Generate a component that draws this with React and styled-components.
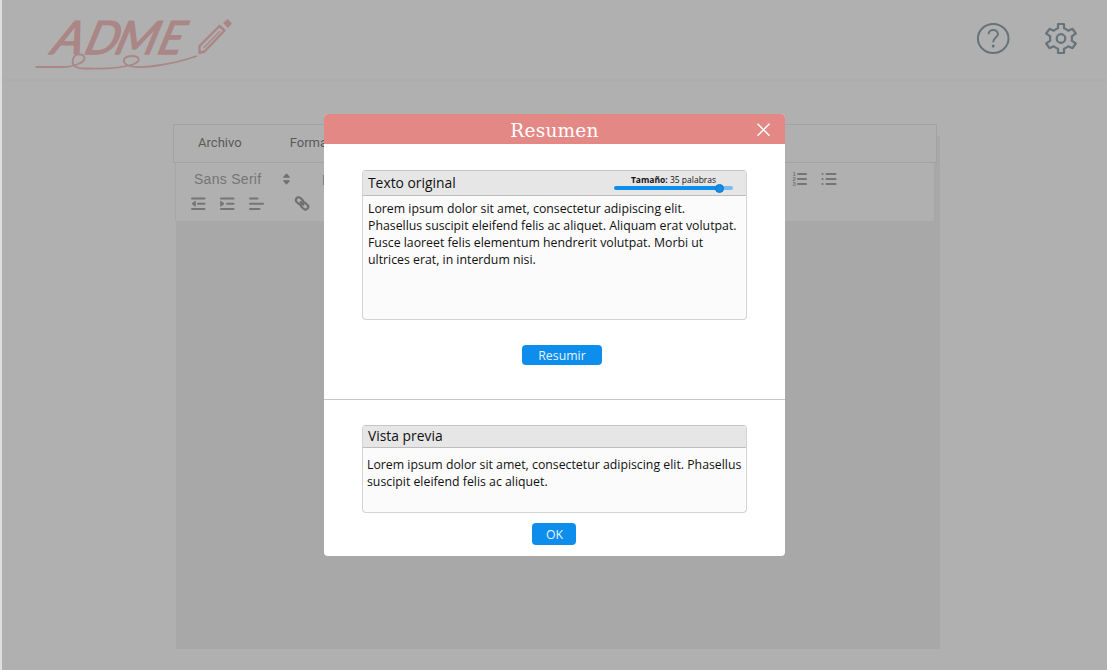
import React from "react";
import styled, { createGlobalStyle } from "styled-components";

const GlobalStyle = createGlobalStyle`
  *, *::before, *::after { box-sizing: border-box; }
  html, body { margin: 0; padding: 0; }
  body { background: #b0b0b0; font-family: "Open Sans", "Noto Sans", sans-serif; overflow: hidden; }
  p, h1, h2 { margin: 0; font-weight: 400; }
  button { font-family: inherit; border: 0; padding: 0; cursor: pointer; }
  svg { display: block; overflow: visible; }
`;

const Page = styled.div`
  height: 670px;
  border-left: 2px solid #dedede;
  background: #b0b0b0;
  overflow: hidden;
`;

const TopBar = styled.header`
  display: flex;
  align-items: flex-start;
  justify-content: space-between;
  height: 79px;
  padding: 16px 29px 0 32px;
  box-shadow: 0 2px 3px rgba(0, 0, 0, 0.02);
`;

const TopActions = styled.nav`
  display: flex;
  gap: 34px;
  padding-top: 6px;
`;

const Wordmark = styled.text`
  font-family: "Lato", "Open Sans", sans-serif;
  font-style: italic;
  font-weight: 400;
  font-size: 46px;
  fill: #aa8686;
  stroke: #aa8686;
  stroke-width: 1.3px;
  stroke-linejoin: round;
`;

const Editor = styled.main`
  width: 767px;
  height: 525px;
  margin: 45px 0 0 171px;
  background: linear-gradient(#a8a8a8, #a8a8a8) 3px 12px / 764px 513px no-repeat;
`;

const MenuBar = styled.div`
  display: flex;
  align-items: center;
  gap: 48px;
  width: 764px;
  height: 39px;
  padding: 0 24px 2px;
  border: 1px solid #a3a3a3;
  background: #b0b0b0;
  font-family: Roboto, sans-serif;
  font-size: 13px;
  letter-spacing: 0.02px;
  color: #5a5a5a;
`;

const Toolbar = styled.div`
  display: flex;
  flex-direction: column;
  width: 760px;
  height: 58px;
  margin-left: 2px;
  padding: 7px 18px 0 14px;
  border: solid #a6a6a6;
  border-width: 0 1px;
  background: #b0b0b0;
`;

const ToolRow = styled.div`
  display: flex;
  align-items: center;
  height: ${(p) => p.$height}px;
`;

const FontName = styled.span`
  display: inline-block;
  width: 93px;
  padding-left: 4px;
  font-family: "Liberation Sans", Arial, sans-serif;
  font-size: 14px;
  line-height: 16px;
  letter-spacing: 0.28px;
  color: #757575;
`;

const Tool = styled.span`
  margin-left: ${(p) => p.$gap || 0}px;
`;

const Overlay = styled.div`
  position: fixed;
  inset: 0;
  display: flex;
  align-items: flex-start;
  padding: 114.4px 0 0 324px;
`;

const Dialog = styled.section`
  width: 461px;
  height: 442px;
  border-radius: 4px;
  background: #fff;
  overflow: hidden;
`;

const DialogHeader = styled.header`
  display: grid;
  grid-template-columns: 1fr auto 1fr;
  align-items: center;
  height: 30px;
  padding: 1px 14px 0 14px;
  background: #e48886;
`;

const DialogTitle = styled.h1`
  grid-column: 2;
  font-family: "Roboto Slab", "DejaVu Serif", serif;
  font-size: 18.5px;
  line-height: 28px;
  letter-spacing: 0.25px;
  padding-top: 2px;
  color: #fff;
`;

const CloseButton = styled.button`
  justify-self: end;
  background: transparent;
`;

const Section = styled.div`
  display: flex;
  flex-direction: column;
  align-items: center;
  height: ${(p) => p.$height}px;
  padding: ${(p) => (p.$divided ? 25 : 26)}px 38px 0;
  border-top: ${(p) => (p.$divided ? "1px solid #c6c6c6" : "0")};
`;

const Panel = styled.div`
  width: 385px;
  height: ${(p) => p.$height}px;
  border: 1px solid #d3d3d3;
  border-top-color: #c4c4c4;
  border-radius: 4px;
  background: #fbfbfb;
  overflow: hidden;
`;

const PanelHeader = styled.div`
  display: flex;
  justify-content: space-between;
  height: ${(p) => p.$height}px;
  padding: 0 13px 0 5px;
  border-bottom: 1px solid #bdbdbd;
  background: #e6e6e6;
`;

const PanelTitle = styled.h2`
  font-size: 13.85px;
  line-height: ${(p) => p.$line}px;
  color: #111;
`;

const PanelText = styled.p`
  padding: ${(p) => p.$top}px 0 0 ${(p) => p.$left}px;
  font-size: 12.31px;
  line-height: 17px;
  color: #111;
  white-space: pre-line;
`;

const SizeControl = styled.div`
  display: flex;
  flex-direction: column;
  align-items: center;
  width: 119px;
  padding-top: 3px;
  font-size: 8.5px;
  line-height: 11px;
  color: #111;
`;

const Track = styled.div`
  display: flex;
  align-items: center;
  width: 100%;
  height: 4px;
  margin-top: 1px;
  border-radius: 2px;
  background: linear-gradient(90deg, #0d8dec 89%, #7bbcf0 89%);
`;

const Thumb = styled.span`
  width: 9px;
  height: 9px;
  margin-left: 101px;
  border-radius: 50%;
  border: 1px solid #1c76bb;
  background: #0d8dec;
`;

const ActionButton = styled.button`
  width: ${(p) => p.$width}px;
  height: ${(p) => p.$height}px;
  margin: ${(p) => p.$margin};
  padding: 1px 0 0 1px;
  border-radius: 4px;
  background: #0d8dec;
  color: #e8f5ff;
  font-size: 12.3px;
  line-height: ${(p) => p.$height - 1}px;
`;

function Logo() {
  return (
    <svg width="200" height="56" viewBox="34 16 200 56" fill="none" stroke="#aa8686">
      <g transform="translate(0 54) skewX(-16)">
        <Wordmark x="50" textLength="31" lengthAdjust="spacingAndGlyphs">A</Wordmark>
        <Wordmark x="83" textLength="33" lengthAdjust="spacingAndGlyphs">D</Wordmark>
        <Wordmark x="113" textLength="42" lengthAdjust="spacingAndGlyphs">M</Wordmark>
        <Wordmark x="156" textLength="24" lengthAdjust="spacingAndGlyphs">E</Wordmark>
      </g>
      <path
        d="M35.500 67H62C75 67 85 62 84.500 58C83.500 53 75 53 73 59C71 66 76 68.500 85 68.500C104 69 123 68 134 64C141 61 140 56 132 56C124 56 121 61 127 65C137 70 171 65 197 56"
        strokeWidth="1.8"
      />
      <path d="M199.500 46L219.500 26L224.500 30.500L204.500 51.500L199.500 53Z" strokeWidth="2.4" strokeLinejoin="round" />
      <path d="M203.500 48L220 31" strokeWidth="1.300" />
      <path d="M224 23L227.500 20L231 23.500L228 27Z" fill="#aa8686" strokeWidth="1.500" strokeLinejoin="round" />
    </svg>
  );
}

function HelpIcon() {
  return (
    <svg width="34" height="33" viewBox="0 0 34 33" fill="none" stroke="#66737a" strokeWidth="2">
      <ellipse cx="17.200" cy="16.500" rx="15.300" ry="14.500" />
      <path d="M12.600 12.200C12.600 6.700 21.900 6.700 21.900 12.200C21.900 15.800 17.200 15.500 17.200 20.200" />
      <circle cx="17.200" cy="24" r="1.500" fill="#66737a" stroke="none" />
    </svg>
  );
}

function GearIcon() {
  return (
    <svg width="34" height="33" viewBox="0 0 34 33" fill="none" stroke="#66737a" strokeWidth="2.200" strokeLinejoin="round">
      <path d="M14 2H20V6.200C21.700 6.800 23 7.500 24.300 8.700L28.500 6.800L31.800 11.500L27.700 14.300C28.100 15.800 28.100 17.200 27.700 18.700L31.800 21.500L28.500 26.200L24.300 24.300C23 25.500 21.700 26.200 20 26.800V31H14V26.800C12.300 26.200 11 25.500 9.700 24.300L5.500 26.200L2.200 21.500L6.300 18.700C5.900 17.200 5.900 15.800 6.300 14.300L2.200 11.500L5.500 6.800L9.700 8.700C11 7.500 12.300 6.800 14 6.200Z" />
      <circle cx="17" cy="16.500" r="4.300" />
    </svg>
  );
}

function ToolIcon({ d, children, width = 16 }) {
  return (
    <svg width={width} height="14" viewBox={`0 0 ${width} 14`} fill="none" stroke="#757575" strokeWidth="2" strokeLinecap="round">
      <path d={d} />
      {children}
    </svg>
  );
}

const ListNumber = styled.text`
  font-family: "Liberation Sans", sans-serif;
  font-weight: 700;
  font-size: 6px;
  fill: #757575;
  stroke: none;
`;

export default function App() {
  return (
    <>
      <GlobalStyle />
      <Page>
        <TopBar>
          <Logo />
          <TopActions>
            <HelpIcon />
            <GearIcon />
          </TopActions>
        </TopBar>
        <Editor>
          <MenuBar>
            <span>Archivo</span>
            <span>Formato</span>
          </MenuBar>
          <Toolbar>
            <ToolRow $height={18}>
              <FontName>Sans Serif</FontName>
              <svg width="7" height="12" viewBox="0 0 7 12" fill="#707070">
                <path d="M3.500 1.200L6.200 4.200H0.800ZM3.500 10.800L0.800 7.800H6.200Z" stroke="#707070" strokeWidth="1.300" strokeLinejoin="round" />
              </svg>
              <Tool $gap={28}><FontName>Normal</FontName></Tool>
              <Tool $gap={381}>
                <ToolIcon d="M6 2H14M6 7H14M6 12H14">
                  <ListNumber x="0.500" y="4">1</ListNumber>
                  <ListNumber x="0.500" y="9.200">2</ListNumber>
                  <ListNumber x="0.500" y="14.400">3</ListNumber>
                </ToolIcon>
              </Tool>
              <Tool $gap={13}>
                <ToolIcon d="M5.500 2H14.500M5.500 7H14.500M5.500 12H14.500M1.500 2H1.600M1.500 7H1.600M1.500 12H1.600" />
              </Tool>
            </ToolRow>
            <ToolRow $height={31}>
              <Tool>
                <ToolIcon d="M2 1.500H14.500M8 6.700H14.500M2 12H14.500">
                  <path d="M5 4.500L2 6.700L5 9Z" fill="#757575" strokeWidth="1" />
                </ToolIcon>
              </Tool>
              <Tool $gap={13}>
                <ToolIcon d="M2 1.500H14.500M8 6.700H14.500M2 12H14.500">
                  <path d="M2 4.500L5 6.700L2 9Z" fill="#757575" strokeWidth="1" />
                </ToolIcon>
              </Tool>
              <Tool $gap={13}>
                <ToolIcon d="M2 1.500H9.500M2 6.700H15M2 12H11.500" />
              </Tool>
              <Tool $gap={30}>
                <svg width="16" height="15" viewBox="0 0 16 15" fill="none" stroke="#707070" strokeWidth="2.200">
                  <rect x="1.500" y="2.200" width="8" height="5.400" rx="2.700" transform="rotate(42 5.500 4.900)" />
                  <rect x="6.500" y="7.200" width="8" height="5.400" rx="2.700" transform="rotate(42 10.500 9.900)" />
                  <path d="M6 5.500L10 9.300" />
                </svg>
              </Tool>
            </ToolRow>
          </Toolbar>
        </Editor>
      </Page>
      <Overlay>
        <Dialog>
          <DialogHeader>
            <DialogTitle>Resumen</DialogTitle>
            <CloseButton aria-label="Cerrar">
              <svg width="14" height="14" viewBox="0 0 14 14" stroke="#fff" strokeWidth="1.5">
                <path d="M0.500 0.800L12.500 12.800M12.500 0.800L0.500 12.800" />
              </svg>
            </CloseButton>
          </DialogHeader>
          <Section $height={254.6}>
            <Panel $height={149.5}>
              <PanelHeader $height={25}>
                <PanelTitle $line={24}>Texto original</PanelTitle>
                <SizeControl>
                  <span><b>Tamaño:</b> 35 palabras</span>
                  <Track><Thumb /></Track>
                </SizeControl>
              </PanelHeader>
              <PanelText $top={4} $left={5}>
                {"Lorem ipsum dolor sit amet, consectetur adipiscing elit.\nPhasellus suscipit eleifend felis ac aliquet. Aliquam erat volutpat.\nFusce laoreet felis elementum hendrerit volutpat. Morbi ut\nultrices erat, in interdum nisi."}
              </PanelText>
            </Panel>
            <ActionButton $width={80} $height={20} $margin="25px 0 0 14px">Resumir</ActionButton>
          </Section>
          <Section $height={157.4} $divided>
            <Panel $height={88}>
              <PanelHeader $height={22}>
                <PanelTitle $line={20}>Vista previa</PanelTitle>
              </PanelHeader>
              <PanelText $top={8} $left={4}>
                {"Lorem ipsum dolor sit amet, consectetur adipiscing elit. Phasellus\nsuscipit eleifend felis ac aliquet."}
              </PanelText>
            </Panel>
            <ActionButton $width={44} $height={22} $margin="10px 1px 0 0">OK</ActionButton>
          </Section>
        </Dialog>
      </Overlay>
    </>
  );
}
